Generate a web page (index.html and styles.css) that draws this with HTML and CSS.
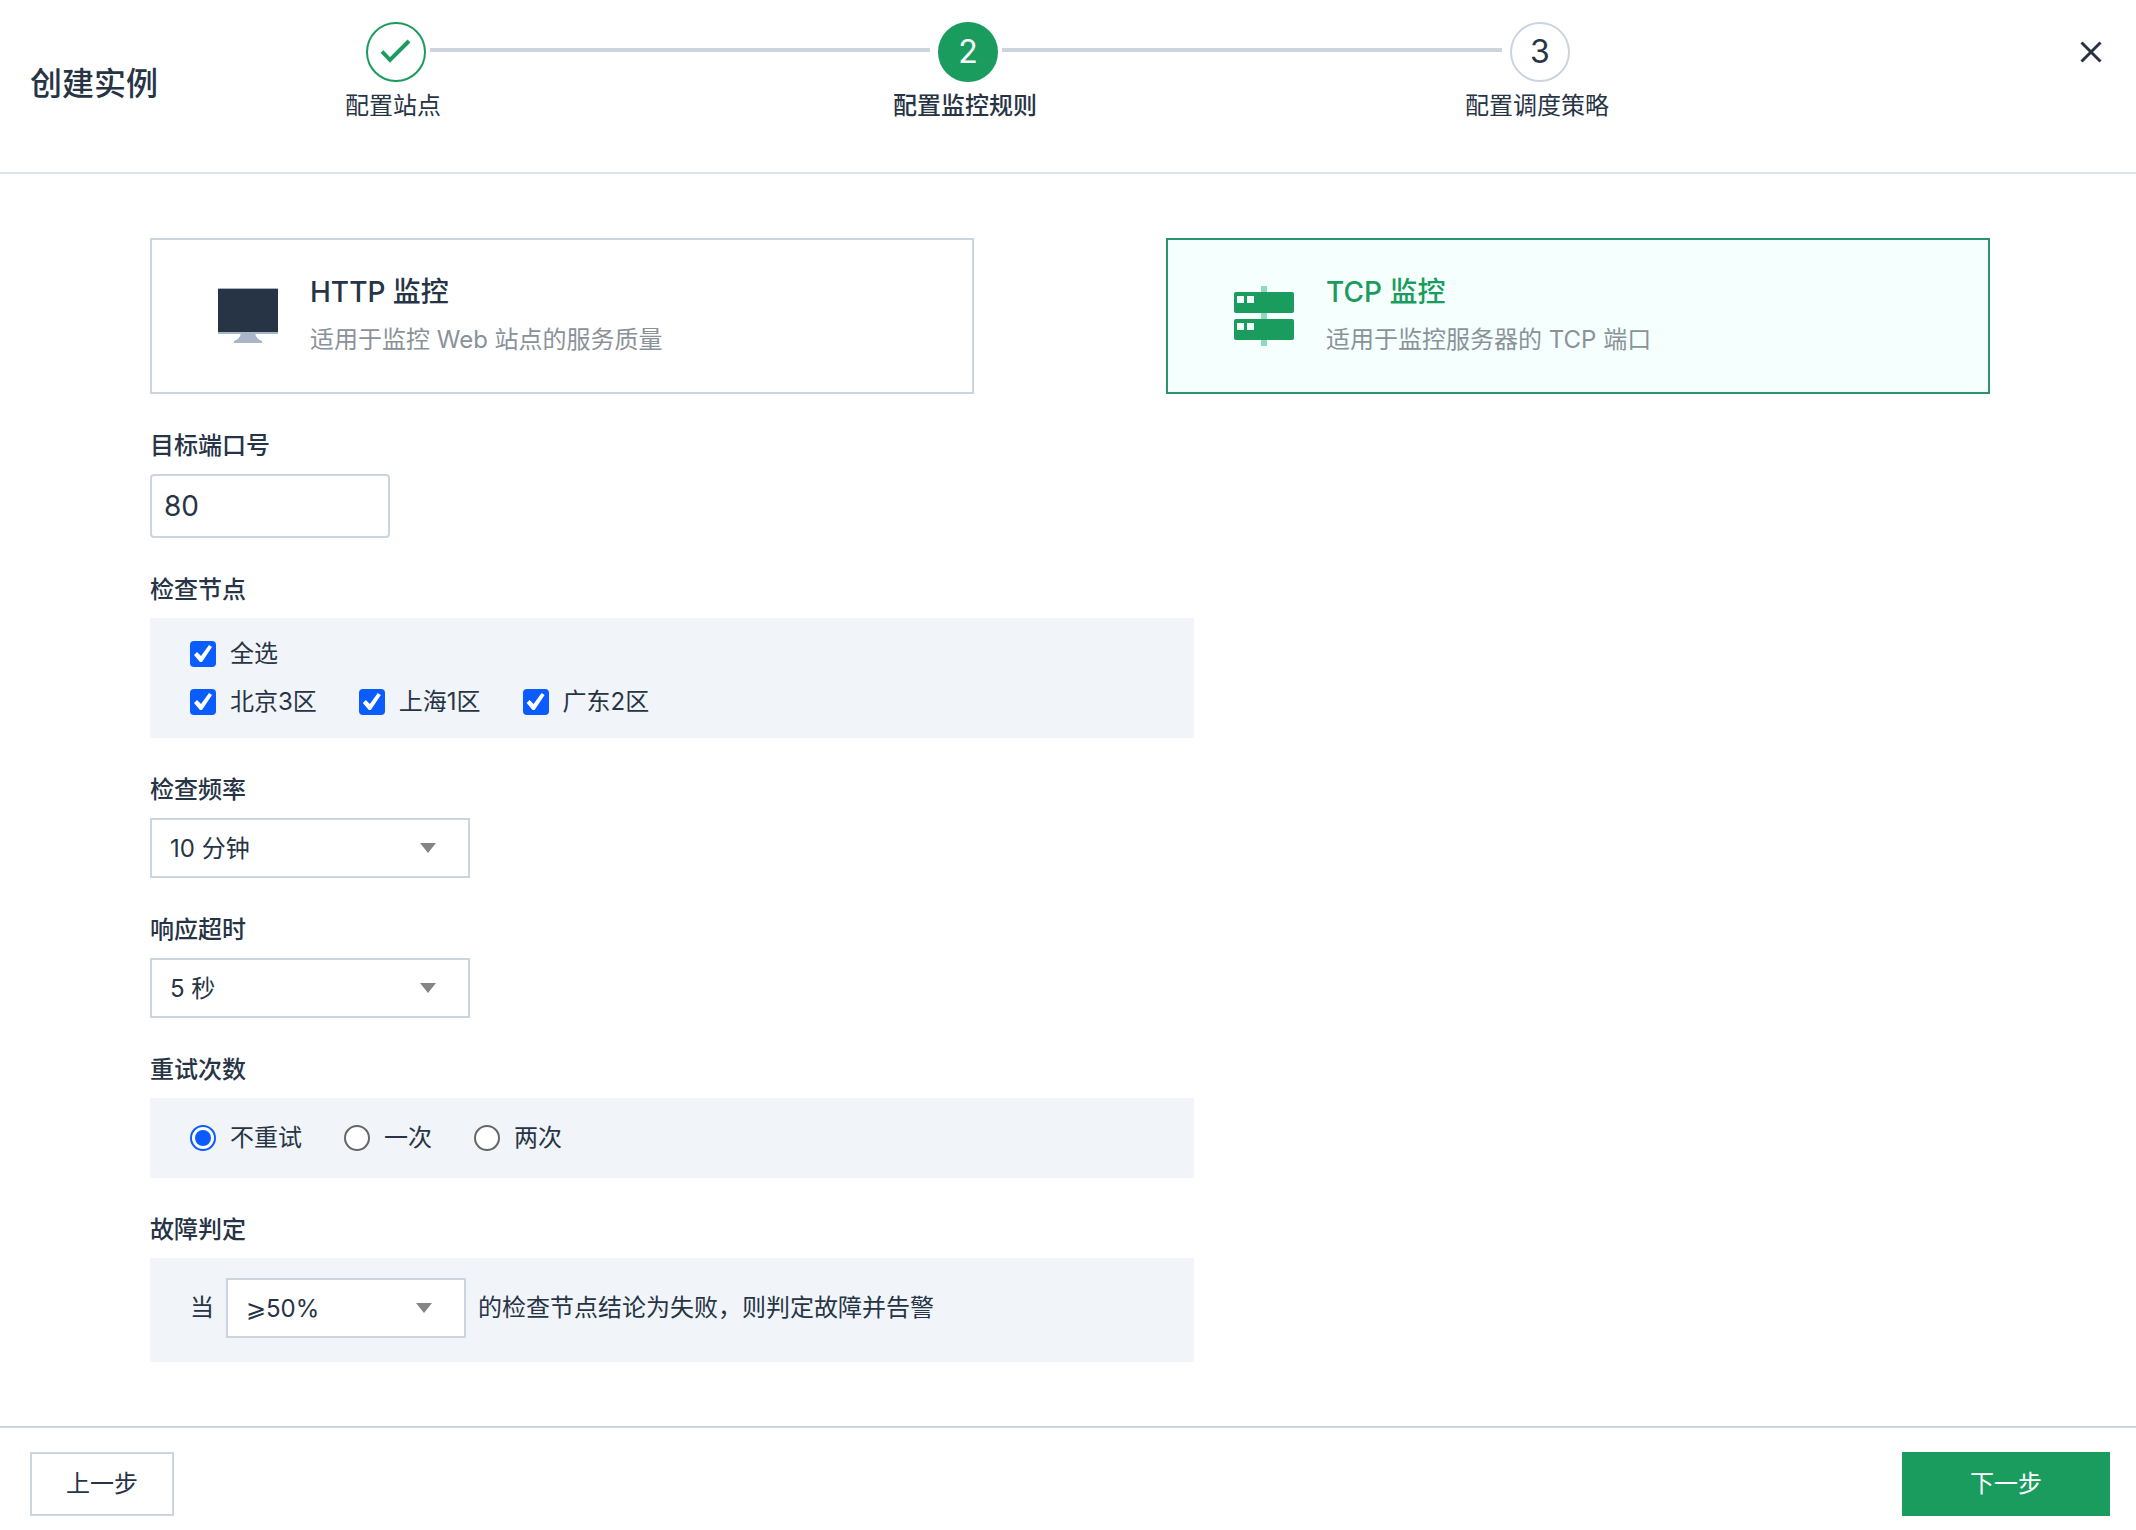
FILE: index.html
```html
<!DOCTYPE html>
<html lang="zh-CN">
<head>
<meta charset="utf-8">
<meta name="viewport" content="width=device-width, initial-scale=1">
<title>创建实例</title>
<link rel="stylesheet" href="styles.css">
</head>
<body>
<header class="header">
  <h1 class="header-title">创建实例</h1>
  <ol class="steps">
    <li class="step step-done">
      <span class="step-marker">
        <svg width="32" height="32" viewBox="0 0 32 32" fill="none" stroke="currentColor" stroke-width="4" aria-hidden="true"><path d="M2 15.500L10 24L29 5"/></svg>
      </span>
      <span class="step-label">配置站点</span>
    </li>
    <li class="step-line" aria-hidden="true"></li>
    <li class="step step-current" aria-current="step">
      <span class="step-marker">2</span>
      <span class="step-label">配置监控规则</span>
    </li>
    <li class="step-line" aria-hidden="true"></li>
    <li class="step">
      <span class="step-marker">3</span>
      <span class="step-label">配置调度策略</span>
    </li>
  </ol>
  <button class="close" type="button" aria-label="关闭">
    <svg width="22" height="22" viewBox="0 0 22 22" stroke="currentColor" stroke-width="3" aria-hidden="true"><path d="M1.500 1.500L20.500 20.500M20.500 1.500L1.500 20.500"/></svg>
  </button>
</header>

<main class="content">
  <div class="cards">
    <button class="card" type="button" aria-pressed="false">
      <svg width="60" height="60" viewBox="0 0 60 60" aria-hidden="true">
        <path fill="#a9b6c7" d="M23 47h14q1 6 7 8v2H16v-2q6-2 7-8z"/>
        <path fill="#a9b6c7" d="M0 2h60v46H0z"/>
        <path fill="#273445" d="M0 3h60v43H0z"/>
      </svg>
      <span class="card-text">
        <span class="card-title">HTTP 监控</span>
        <span class="card-desc">适用于监控 Web 站点的服务质量</span>
      </span>
    </button>
    <button class="card card-selected" type="button" aria-pressed="true">
      <svg width="60" height="60" viewBox="0 0 60 60" aria-hidden="true">
        <path fill="#8fdab8" d="M27 0h6v60h-6z"/>
        <rect fill="#1a9c5e" y="6" width="60" height="21" rx="2"/>
        <rect fill="#1a9c5e" y="33" width="60" height="21" rx="2"/>
        <path fill="#f0fffa" d="M3 10h7v7H3zM13 10h7v7h-7zM3 37h7v7H3zM13 37h7v7h-7z"/>
      </svg>
      <span class="card-text">
        <span class="card-title">TCP 监控</span>
        <span class="card-desc">适用于监控服务器的 TCP 端口</span>
      </span>
    </button>
  </div>

  <form class="form" id="rules">
    <div class="field">
      <label class="field-label" for="port">目标端口号</label>
      <input class="text-input" id="port" type="text" inputmode="numeric" value="80">
    </div>

    <fieldset class="field">
      <legend class="field-label">检查节点</legend>
      <div class="panel panel-nodes">
        <div class="options">
          <label class="option"><input class="checkbox" type="checkbox" checked>全选</label>
        </div>
        <div class="options">
          <label class="option"><input class="checkbox" type="checkbox" checked>北京3区</label>
          <label class="option"><input class="checkbox" type="checkbox" checked>上海1区</label>
          <label class="option"><input class="checkbox" type="checkbox" checked>广东2区</label>
        </div>
      </div>
    </fieldset>

    <div class="field">
      <label class="field-label" for="frequency">检查频率</label>
      <span class="select"><select id="frequency"><option>10 分钟</option></select></span>
    </div>

    <div class="field">
      <label class="field-label" for="timeout">响应超时</label>
      <span class="select"><select id="timeout"><option>5 秒</option></select></span>
    </div>

    <fieldset class="field">
      <legend class="field-label">重试次数</legend>
      <div class="panel">
        <div class="options">
          <label class="option"><input class="radio" type="radio" name="retry" checked>不重试</label>
          <label class="option"><input class="radio" type="radio" name="retry">一次</label>
          <label class="option"><input class="radio" type="radio" name="retry">两次</label>
        </div>
      </div>
    </fieldset>

    <div class="field">
      <label class="field-label" for="threshold">故障判定</label>
      <div class="panel panel-rule">
        <span>当</span>
        <span class="select select-small"><select id="threshold"><option>⩾50%</option></select></span>
        <span>的检查节点结论为失败，则判定故障并告警</span>
      </div>
    </div>
  </form>
</main>

<footer class="footer">
  <button class="button" type="button">上一步</button>
  <button class="button button-primary" type="submit" form="rules">下一步</button>
</footer>
</body>
</html>
```

FILE: styles.css
```css
:root {
  --green: #1a9c5e;
  --text: #273445;
  --muted: #8a9299;
  --border: #cbd5e0;
  --panel: #f1f5f9;
  --blue: #0b5cff;
}

* {
  box-sizing: border-box;
}

body {
  display: flex;
  flex-direction: column;
  min-height: 100vh;
  margin: 0;
  background: #fff;
  color: var(--text);
  font: 24px/36px Inter, "Noto Sans CJK SC", sans-serif;
}

button,
input,
select {
  margin: 0;
  color: inherit;
  font: inherit;
}

/* Header */

.header {
  display: grid;
  grid-template-columns: 336fr 1204fr 532fr;
  align-items: start;
  padding: 22px 34px 48px 30px;
  border-bottom: 2px solid #dbe5ea;
}

.header-title {
  margin: 0;
  padding-top: 38px;
  font-size: 32px;
  font-weight: 500;
  line-height: 48px;
}

.steps {
  display: flex;
  margin: 0;
  padding: 0;
  list-style: none;
}

.step {
  display: flex;
  flex-direction: column;
  align-items: center;
  gap: 6px;
  width: 60px;
}

.step-marker {
  display: flex;
  align-items: center;
  justify-content: center;
  width: 60px;
  height: 60px;
  border: 2px solid var(--border);
  border-radius: 50%;
  font-size: 32px;
}

.step-done .step-marker {
  border-color: var(--green);
  color: var(--green);
}

.step-current .step-marker {
  border-color: var(--green);
  background: var(--green);
  color: #fff;
}

.step-label {
  margin-right: 6px;
  white-space: nowrap;
}

.step-current .step-label {
  font-weight: 500;
}

.step-line {
  flex: 1;
  height: 4px;
  margin: 26px 8px 0 4px;
  background: #ccd5dd;
}

.close {
  display: flex;
  align-items: center;
  justify-self: end;
  height: 60px;
  padding: 0;
  border: 0;
  background: none;
}

/* Monitor type cards */

.content {
  flex: 1;
  padding: 64px 146px 64px 150px;
}

.cards {
  display: grid;
  grid-template-columns: 1fr 1fr;
  gap: 192px;
}

.card {
  display: flex;
  align-items: center;
  gap: 32px;
  min-height: 156px;
  padding: 0 66px;
  border: 2px solid var(--border);
  background: #fff;
  text-align: left;
}

.card-selected {
  border-color: #2b9468;
  background: #f5fffd;
}

.card-text {
  display: flex;
  flex-direction: column;
  gap: 10px;
  padding-bottom: 2px;
}

.card-title {
  font-size: 28px;
  font-weight: 500;
  line-height: 40px;
}

.card-selected .card-title {
  color: var(--green);
}

.card-desc {
  color: var(--muted);
}

/* Form */

.field {
  display: block;
  margin: 34px 0 0;
  padding: 0;
  border: 0;
}

.field-label {
  display: block;
  margin-bottom: 10px;
  padding: 0;
  font-weight: 500;
}

.text-input {
  display: block;
  width: 240px;
  height: 64px;
  padding: 0 12px;
  border: 2px solid var(--border);
  border-radius: 4px;
  background: #fff;
  font-size: 28px;
}

.panel {
  max-width: 1044px;
  padding: 22px 40px;
  background: var(--panel);
}

.panel-nodes {
  display: grid;
  gap: 12px;
  padding: 18px 40px;
}

.panel-rule {
  display: flex;
  align-items: center;
  gap: 12px;
  padding: 20px 40px 24px;
}

.options {
  display: flex;
  gap: 42px;
}

.option {
  display: flex;
  align-items: center;
  gap: 14px;
}

.checkbox,
.radio {
  display: grid;
  place-items: center;
  width: 26px;
  height: 26px;
  appearance: none;
  background: #fff;
}

.checkbox {
  border-radius: 4px;
}

.checkbox:checked {
  background: var(--blue);
}

.checkbox:checked::before {
  width: 26px;
  height: 26px;
  background: #fff;
  clip-path: polygon(4px 14px, 7px 11px, 11px 15px, 19px 4px, 22px 6px, 12px 21px, 10px 21px);
  content: "";
}

.radio {
  border: 2px solid #666;
  border-radius: 50%;
}

.radio:checked {
  border-color: var(--blue);
}

.radio:checked::before {
  width: 16px;
  height: 16px;
  border-radius: 50%;
  background: var(--blue);
  content: "";
}

.select {
  display: grid;
  align-items: center;
  width: 320px;
}

.select-small {
  width: 240px;
}

.select select {
  grid-area: 1 / 1;
  width: 100%;
  height: 60px;
  padding: 2px 60px 0 18px;
  appearance: none;
  border: 2px solid var(--border);
  border-radius: 0;
  background: #fff;
}

.select::after {
  grid-area: 1 / 1;
  justify-self: end;
  width: 16px;
  height: 10px;
  margin-right: 34px;
  background: #858585;
  clip-path: polygon(0 0, 100% 0, 50% 100%);
  content: "";
  pointer-events: none;
}

/* Footer */

.footer {
  display: flex;
  justify-content: space-between;
  padding: 24px 26px 14px 30px;
  border-top: 2px solid var(--border);
}

.button {
  min-width: 144px;
  height: 64px;
  padding: 0 20px;
  border: 2px solid var(--border);
  background: #fff;
}

.button-primary {
  min-width: 208px;
  border-color: var(--green);
  background: var(--green);
  color: #fff;
}
```
